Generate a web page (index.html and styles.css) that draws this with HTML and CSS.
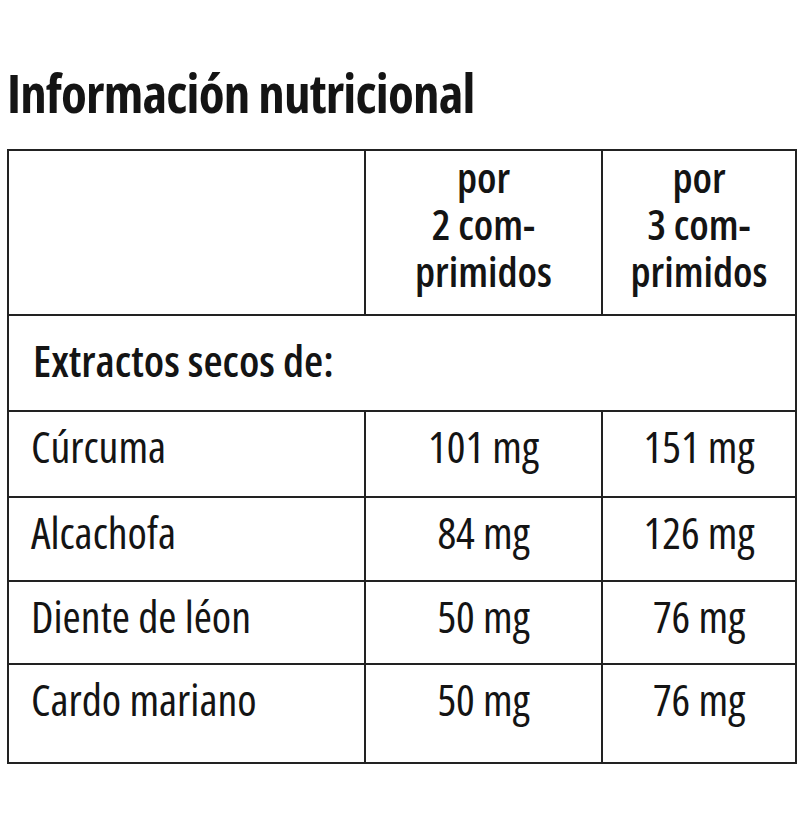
FILE: index.html
```html
<!DOCTYPE html>
<html lang="es">
<head>
<meta charset="utf-8">
<title>Información nutricional</title>
<link rel="stylesheet" href="styles.css">
</head>
<body>
<main class="page">
  <h1 class="title">Información nutricional</h1>
  <table class="nutri">
    <colgroup>
      <col class="c1"><col class="c2"><col class="c3">
    </colgroup>
    <thead>
      <tr class="r-head">
        <th class="blank"></th>
        <th class="hd">por<br>2 com-<br>primidos</th>
        <th class="hd">por<br>3 com-<br>primidos</th>
      </tr>
    </thead>
    <tbody>
      <tr class="r-sec">
        <td class="sec" colspan="3">Extractos secos de:</td>
      </tr>
      <tr class="r-1">
        <td class="name">Cúrcuma</td><td class="val">101 mg</td><td class="val">151 mg</td>
      </tr>
      <tr class="r-2">
        <td class="name">Alcachofa</td><td class="val">84 mg</td><td class="val">126 mg</td>
      </tr>
      <tr class="r-3">
        <td class="name">Diente de léon</td><td class="val">50 mg</td><td class="val">76 mg</td>
      </tr>
      <tr class="r-4">
        <td class="name">Cardo mariano</td><td class="val">50 mg</td><td class="val">76 mg</td>
      </tr>
    </tbody>
  </table>
</main>
</body>
</html>
```
FILE: styles.css
```css
html, body {
  margin: 0;
  padding: 0;
  background: #ffffff;
}
body {
  font-family: "Open Sans", "DejaVu Sans", sans-serif;
  font-stretch: 75%;
  color: #141414;
}
.page {
  padding: 63px 0 0 7px;
  width: 788px;
}
.title {
  margin: 0 0 26px 0;
  font-size: 53px;
  line-height: 60px;
  font-weight: 700;
  letter-spacing: -0.8px;
}
.nutri {
  border-collapse: collapse;
  width: 788px;
  table-layout: fixed;
}
.c1 { width: 357px; }
.c2 { width: 237px; }
.c3 { width: 194px; }
.nutri th, .nutri td {
  border: 2px solid #222;
  vertical-align: top;
  padding: 0;
}
.nutri .hd {
  font-size: 42px;
  line-height: 47px;
  font-weight: 600;
  text-align: center;
  padding-top: 2px;
}
.nutri .sec {
  font-size: 44px;
  line-height: 52px;
  font-weight: 600;
  text-align: left;
  padding: 18px 0 0 24px;
}
.nutri .name, .nutri .val {
  font-size: 44px;
  line-height: 52px;
  font-weight: 400;
  padding-top: 8px;
}
.nutri .name {
  padding-left: 22px;
}
.nutri .val {
  text-align: center;
}
.r-head { height: 165px; }
.r-sec { height: 96px; }
.r-1 { height: 86px; }
.r-2 { height: 84px; }
.r-3 { height: 83px; }
.r-4 { height: 99px; }
```
